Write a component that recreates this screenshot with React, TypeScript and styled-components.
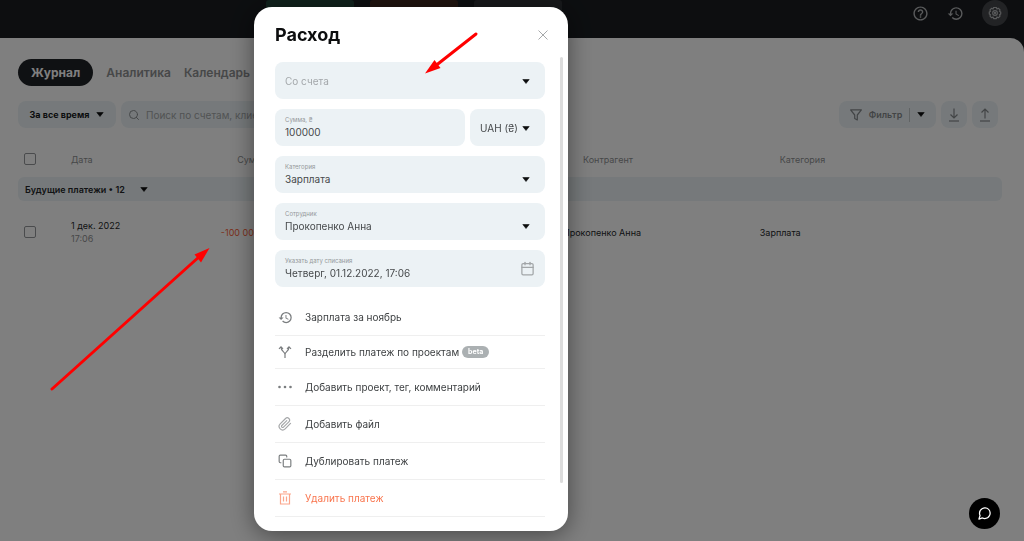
import React from 'react';
import styled, { createGlobalStyle } from 'styled-components';
import { FiCalendar, FiCopy, FiMessageCircle, FiPaperclip, FiSearch } from 'react-icons/fi';
import { MdHelpOutline, MdHistory } from 'react-icons/md';

const GlobalStyle = createGlobalStyle`
  *, *::before, *::after { box-sizing: border-box; }
  body { margin: 0; background: #1a1d21; }
  body, button, input, select { font-family: Inter, "Liberation Sans", sans-serif; }
  button, select, input { border: 0; padding: 0; margin: 0; background: none; color: inherit; }
`;

const Page = styled.div`
  min-height: 100vh;
  display: flex;
  flex-direction: column;
  overflow: hidden;
`;

const TopBar = styled.header`
  height: 38px;
  display: flex;
  justify-content: space-between;
  padding: 0 16px 0 266px;
`;

const Totals = styled.div`
  display: flex;
  gap: 16px;
`;

const Total = styled.div<{ $tone: string }>`
  width: 88px;
  height: 26px;
  border-radius: 3px 3px 12px 12px;
  background: ${(p) => p.$tone};
`;

const TopActions = styled.nav`
  display: flex;
  align-items: center;
  height: 26px;
  gap: 9px;
`;

const RoundButton = styled.button<{ $filled?: boolean }>`
  width: 26px;
  height: 26px;
  margin-left: ${(p) => (p.$filled ? '5px' : '0')};
  border-radius: 50%;
  display: grid;
  place-items: center;
  color: #b4b6b8;
  background: ${(p) => (p.$filled ? '#45474b' : 'none')};
`;

const Main = styled.main`
  flex: 1;
  background: #fff;
  border-top-right-radius: 14px;
  padding: 21px 22px 0 18px;
`;

const Tabs = styled.nav`
  display: flex;
  align-items: center;
  gap: 13px;
  height: 27px;
`;

const Tab = styled.a<{ $active?: boolean }>`
  height: 27px;
  line-height: 27px;
  padding: ${(p) => (p.$active ? '0 13px' : '0')};
  border-radius: 14px;
  font-size: 12px;
  font-weight: ${(p) => (p.$active ? 700 : 600)};
  text-decoration: none;
  color: ${(p) => (p.$active ? '#fff' : '#8e9092')};
  background: ${(p) => (p.$active ? '#1f2226' : 'none')};
`;

const Toolbar = styled.div`
  display: flex;
  gap: 5px;
  margin-top: 15px;
  padding-right: 4px;
`;

const ToolButton = styled.button<{ $width: number; $muted?: boolean }>`
  width: ${(p) => p.$width}px;
  height: 27px;
  border-radius: 8px;
  background: #ecf3f6;
  display: flex;
  align-items: center;
  justify-content: center;
  gap: 7px;
  font-size: 9px;
  font-weight: ${(p) => (p.$muted ? 600 : 700)};
  color: ${(p) => (p.$muted ? '#85898c' : '#16181a')};
`;

const SearchBox = styled.label`
  flex: 1;
  max-width: 300px;
  height: 27px;
  margin-right: auto;
  padding: 0 7px;
  border-radius: 8px;
  background: #ecf3f6;
  display: flex;
  align-items: center;
  gap: 6px;
  color: #8b8f92;
`;

const SearchInput = styled.input`
  flex: 1;
  min-width: 0;
  font-size: 10px;
  outline: 0;
  &::placeholder { color: #a3a6a8; opacity: 1; }
`;

const Divider = styled.span`
  width: 1px;
  height: 14px;
  background: #c0c6c9;
`;

const Table = styled.table`
  width: 100%;
  margin-top: 19px;
  table-layout: fixed;
  border-collapse: collapse;
  font-size: 9px;
  line-height: 13px;
  color: #24272a;
`;

const Th = styled.th<{ $indent?: number; $end?: boolean }>`
  height: 30px;
  padding: 0 0 6px ${(p) => p.$indent ?? 0}px;
  text-align: ${(p) => (p.$end ? 'right' : 'left')};
  font-weight: 400;
  color: #8e9092;
`;

const Td = styled.td<{ $indent?: number; $color?: string; $end?: boolean }>`
  height: 62px;
  padding: 0 0 0 ${(p) => p.$indent ?? 0}px;
  text-align: ${(p) => (p.$end ? 'right' : 'left')};
  color: ${(p) => p.$color ?? 'inherit'};
`;

const Time = styled.div`
  color: #8e9092;
`;

const GroupCell = styled.td`
  height: 24px;
  padding: 0 7px;
  border-radius: 6px;
  background: #ecf3f6;
`;

const GroupToggle = styled.button`
  display: flex;
  align-items: center;
  gap: 15px;
  font-size: 9px;
  font-weight: 600;
`;

const Check = styled.input`
  appearance: none;
  display: block;
  width: 12px;
  height: 12px;
  border: 1px solid #94979a;
  border-radius: 2px;
`;

const Overlay = styled.div`
  position: fixed;
  inset: 0;
  padding: 7px 0 0 254px;
  background: rgba(0, 0, 0, 0.5);
`;

const Dialog = styled.section`
  width: 314px;
  padding: 0 5px 14px 21px;
  border-radius: 18px;
  background: #fff;
  box-shadow: 0 4px 24px rgba(0, 0, 0, 0.45);
`;

const DialogHeader = styled.header`
  height: 50px;
  padding: 5px 14px 0 0;
  display: flex;
  align-items: center;
  justify-content: space-between;
`;

const Title = styled.h2`
  margin: 0;
  font-size: 18px;
  line-height: 24px;
  font-weight: 700;
  color: #0c0d0e;
`;

const CloseButton = styled.button`
  width: 12px;
  height: 12px;
  display: grid;
  place-items: center;
  color: #a6a8aa;
`;

const DialogBody = styled.div`
  display: flex;
  justify-content: space-between;
`;

const Form = styled.form`
  width: 270px;
  padding-top: 5px;
`;

const Scrollbar = styled.div`
  width: 3px;
  margin-bottom: 34px;
  border-radius: 2px;
  background: #dcdcdc;
`;

const Fields = styled.div`
  display: grid;
  gap: 10px;
`;

const FieldRow = styled.div`
  display: flex;
  gap: 5px;
`;

const FieldBox = styled.label<{ $width?: number }>`
  ${(p) => (p.$width ? `width: ${p.$width}px;` : 'flex: 1;')}
  min-width: 0;
  height: 37px;
  padding: 0 10px;
  border-radius: 8px;
  background: #ecf2f5;
  display: flex;
  align-items: center;
  color: #46494b;
`;

const FieldText = styled.span`
  flex: 1;
  min-width: 0;
  display: flex;
  flex-direction: column;
`;

const Caption = styled.span`
  font-size: 6px;
  line-height: 8px;
  color: #94989a;
`;

const Select = styled.select<{ $empty?: boolean }>`
  appearance: none;
  width: 100%;
  height: 16px;
  font-size: 10px;
  line-height: 16px;
  outline: 0;
  color: ${(p) => (p.$empty ? '#a3a7aa' : 'inherit')};
`;

const TextInput = styled.input`
  width: 100%;
  height: 16px;
  font-size: 10px;
  line-height: 16px;
  outline: 0;
`;

const CaretSlot = styled.span<{ $low: boolean }>`
  display: flex;
  padding: ${(p) => (p.$low ? '9px' : '2px')} 5px 0 0;
`;

const Actions = styled.div`
  margin-top: 12px;
`;

const Action = styled.button<{ $short?: boolean; $danger?: boolean }>`
  width: 100%;
  height: ${(p) => (p.$short ? 33 : 37)}px;
  border-bottom: 1px solid #efefef;
  display: flex;
  align-items: center;
  font-size: 10px;
  color: ${(p) => (p.$danger ? '#f9754e' : '#3c3f41')};
`;

const ActionIcon = styled.span<{ $color?: string }>`
  width: 20px;
  margin-right: 10px;
  display: grid;
  place-items: center;
  color: ${(p) => p.$color ?? '#7a7d7f'};
`;

const Badge = styled.span`
  height: 12px;
  margin-left: 3px;
  padding: 0 6px;
  border-radius: 6px;
  font-size: 7px;
  line-height: 12px;
  font-weight: 700;
  color: #fff;
  background: #abb0b2;
`;

const ChatButton = styled.button`
  position: fixed;
  right: 24px;
  bottom: 12px;
  width: 31px;
  height: 31px;
  border-radius: 50%;
  display: grid;
  place-items: center;
  color: #fff;
  background: #000;
`;

const Annotations = styled.svg`
  position: fixed;
  left: 0;
  top: 0;
  pointer-events: none;
`;

const Caret = () => (
  <svg width="8" height="5" viewBox="0 0 8 5" aria-hidden="true">
    <path d="M.8.5h6.400L4 4.500z" fill="#0c0d0e" stroke="#0c0d0e" strokeWidth=".6" strokeLinejoin="round" />
  </svg>
);

const SettingsIcon = () => (
  <svg width="14" height="14" viewBox="0 0 24 24" fill="none" stroke="currentColor" strokeWidth="2" strokeLinejoin="round" aria-hidden="true">
    <path d="M9.600 2.500h4.800l1 2.600 2.600-1.100 2.600 2.800-.9 2.400 2.100 1.200v3.200l-2.100 1.200.9 2.400-2.600 2.800-2.600-1.100-1 2.600H9.600l-1-2.600-2.600 1.100-2.600-2.800.9-2.400-2.100-1.200v-3.200l2.100-1.200-.9-2.400L6 4l2.600 1.100z" />
    <circle cx="12" cy="12" r="4" />
    <circle cx="12" cy="12" r="1" />
  </svg>
);

const FilterIcon = () => (
  <svg width="12" height="12" viewBox="0 0 12 12" fill="none" stroke="currentColor" strokeWidth="1.200" strokeLinejoin="round" aria-hidden="true">
    <path d="M.6.9h10.800L7.300 6v5L4.700 9.500V6z" />
  </svg>
);

const TransferIcon = ({ up }: { up?: boolean }) => (
  <svg width="12" height="14" viewBox="0 0 12 14" fill="none" stroke="currentColor" strokeWidth="1.200" aria-hidden="true">
    <path d={up ? 'M6 10.500V1M2.500 4.500L6 1l3.500 3.500' : 'M6 .5V10M2.500 6.500L6 10l3.500-3.500'} />
    <path d="M1 13h10" />
  </svg>
);

const SplitIcon = () => (
  <svg width="14" height="14" viewBox="0 0 14 14" fill="none" stroke="currentColor" strokeWidth="1.200" aria-hidden="true">
    <path d="M7 13V9.500C7 6.500 3 6.500 3 2M7 9.500C7 6.500 11 6.500 11 2" />
    <path d="M1 3.800l2-2 2 2M9 3.800l2-2 2 2" />
  </svg>
);

const DotsIcon = () => (
  <svg width="14" height="4" viewBox="0 0 14 4" fill="currentColor" aria-hidden="true">
    <circle cx="1.500" cy="2" r="1.300" />
    <circle cx="7" cy="2" r="1.300" />
    <circle cx="12.500" cy="2" r="1.300" />
  </svg>
);

const TrashIcon = () => (
  <svg width="14" height="14" viewBox="0 0 14 14" fill="none" stroke="currentColor" strokeWidth="1.200" aria-hidden="true">
    <path d="M1 3h12M5 .8h4M2.500 3v10h9V3M5.500 5.500v5M8.500 5.500v5" />
  </svg>
);

const CloseIcon = () => (
  <svg width="10" height="10" viewBox="0 0 10 10" fill="none" stroke="currentColor" aria-hidden="true">
    <path d="M.5.5l9 9M9.500.5l-9 9" />
  </svg>
);

const SelectField = ({ caption, value, label, width }: { caption?: string; value: string; label?: string; width?: number }) => (
  <FieldBox $width={width}>
    <FieldText>
      {caption && <Caption>{caption}</Caption>}
      <Select $empty={!caption && !width} aria-label={label} defaultValue={value}>
        <option>{value}</option>
      </Select>
    </FieldText>
    <CaretSlot $low={Boolean(caption)}>
      <Caret />
    </CaretSlot>
  </FieldBox>
);

export default function App() {
  return (
    <>
      <GlobalStyle />
      <Page>
        <TopBar>
          <Totals>
            <Total $tone="#22443a" />
            <Total $tone="#40291f" />
            <Total $tone="#2f3236" />
          </Totals>
          <TopActions>
            <RoundButton aria-label="Помощь"><MdHelpOutline size={17} /></RoundButton>
            <RoundButton aria-label="История"><MdHistory size={17} /></RoundButton>
            <RoundButton $filled aria-label="Настройки"><SettingsIcon /></RoundButton>
          </TopActions>
        </TopBar>
        <Main>
          <Tabs>
            <Tab href="#journal" $active>Журнал</Tab>
            <Tab href="#analytics">Аналитика</Tab>
            <Tab href="#calendar">Календарь</Tab>
          </Tabs>
          <Toolbar>
            <ToolButton $width={98}>За все время <Caret /></ToolButton>
            <SearchBox>
              <FiSearch size={12} />
              <SearchInput aria-label="Поиск" placeholder="Поиск по счетам, клиентам" />
            </SearchBox>
            <ToolButton $width={97} $muted>
              <FilterIcon />Фильтр<Divider /><Caret />
            </ToolButton>
            <ToolButton $width={26} $muted aria-label="Скачать"><TransferIcon /></ToolButton>
            <ToolButton $width={26} $muted aria-label="Загрузить"><TransferIcon up /></ToolButton>
          </Toolbar>
          <Table>
            <colgroup>
              <col style={{ width: '53px' }} />
              <col style={{ width: '11%' }} />
              <col style={{ width: '9%' }} />
              <col style={{ width: '30%' }} />
              <col style={{ width: '20%' }} />
              <col />
            </colgroup>
            <thead>
              <tr>
                <Th $indent={6}><Check type="checkbox" aria-label="Выбрать все" /></Th>
                <Th>Дата</Th>
                <Th $end>Сумма</Th>
                <Th />
                <Th $indent={20}>Контрагент</Th>
                <Th $indent={20}>Категория</Th>
              </tr>
            </thead>
            <tbody>
              <tr>
                <GroupCell colSpan={6}>
                  <GroupToggle>Будущие платежи • 12 <Caret /></GroupToggle>
                </GroupCell>
              </tr>
              <tr>
                <Td $indent={6}><Check type="checkbox" aria-label="Выбрать платеж" /></Td>
                <Td>1 дек. 2022<Time>17:06</Time></Td>
                <Td $end $color="#f9623a">-100 000 ₴</Td>
                <Td />
                <Td>Прокопенко Анна</Td>
                <Td>Зарплата</Td>
              </tr>
            </tbody>
          </Table>
        </Main>
      </Page>
      <Overlay>
        <Dialog role="dialog" aria-label="Расход">
          <DialogHeader>
            <Title>Расход</Title>
            <CloseButton aria-label="Закрыть"><CloseIcon /></CloseButton>
          </DialogHeader>
          <DialogBody>
            <Form>
              <Fields>
                <SelectField value="Со счета" label="Со счета" />
                <FieldRow>
                  <FieldBox>
                    <FieldText>
                      <Caption>Сумма, ₴</Caption>
                      <TextInput defaultValue="100000" />
                    </FieldText>
                  </FieldBox>
                  <SelectField value="UAH (₴)" label="Валюта" width={75} />
                </FieldRow>
                <SelectField caption="Категория" value="Зарплата" />
                <SelectField caption="Сотрудник" value="Прокопенко Анна" />
                <FieldBox>
                  <FieldText>
                    <Caption>Указать дату списания</Caption>
                    <TextInput defaultValue="Четверг, 01.12.2022, 17:06" />
                  </FieldText>
                  <FiCalendar size={15} color="#a2a6a8" />
                </FieldBox>
              </Fields>
              <Actions>
                <Action type="button">
                  <ActionIcon><MdHistory size={15} /></ActionIcon>Зарплата за ноябрь
                </Action>
                <Action type="button" $short>
                  <ActionIcon><SplitIcon /></ActionIcon>Разделить платеж по проектам<Badge>beta</Badge>
                </Action>
                <Action type="button">
                  <ActionIcon><DotsIcon /></ActionIcon>Добавить проект, тег, комментарий
                </Action>
                <Action type="button">
                  <ActionIcon $color="#a5a7a9"><FiPaperclip size={14} /></ActionIcon>Добавить файл
                </Action>
                <Action type="button">
                  <ActionIcon><FiCopy size={14} /></ActionIcon>Дублировать платеж
                </Action>
                <Action type="button" $danger>
                  <ActionIcon $color="#fba58b"><TrashIcon /></ActionIcon>Удалить платеж
                </Action>
              </Actions>
            </Form>
            <Scrollbar />
          </DialogBody>
        </Dialog>
      </Overlay>
      <ChatButton aria-label="Чат"><FiMessageCircle size={15} /></ChatButton>
      <Annotations width="490" height="400" viewBox="0 0 490 400" aria-hidden="true">
        <g stroke="#f00" strokeWidth="3" strokeLinecap="round" fill="#f00">
          <path d="M52 389L200 256" />
          <path d="M476 34L434 67" />
          <path stroke="none" d="M209.500 248L201 262.500 194.500 254.500z" />
          <path stroke="none" d="M425 73.500L434.500 60 440.500 68z" />
        </g>
      </Annotations>
    </>
  );
}
